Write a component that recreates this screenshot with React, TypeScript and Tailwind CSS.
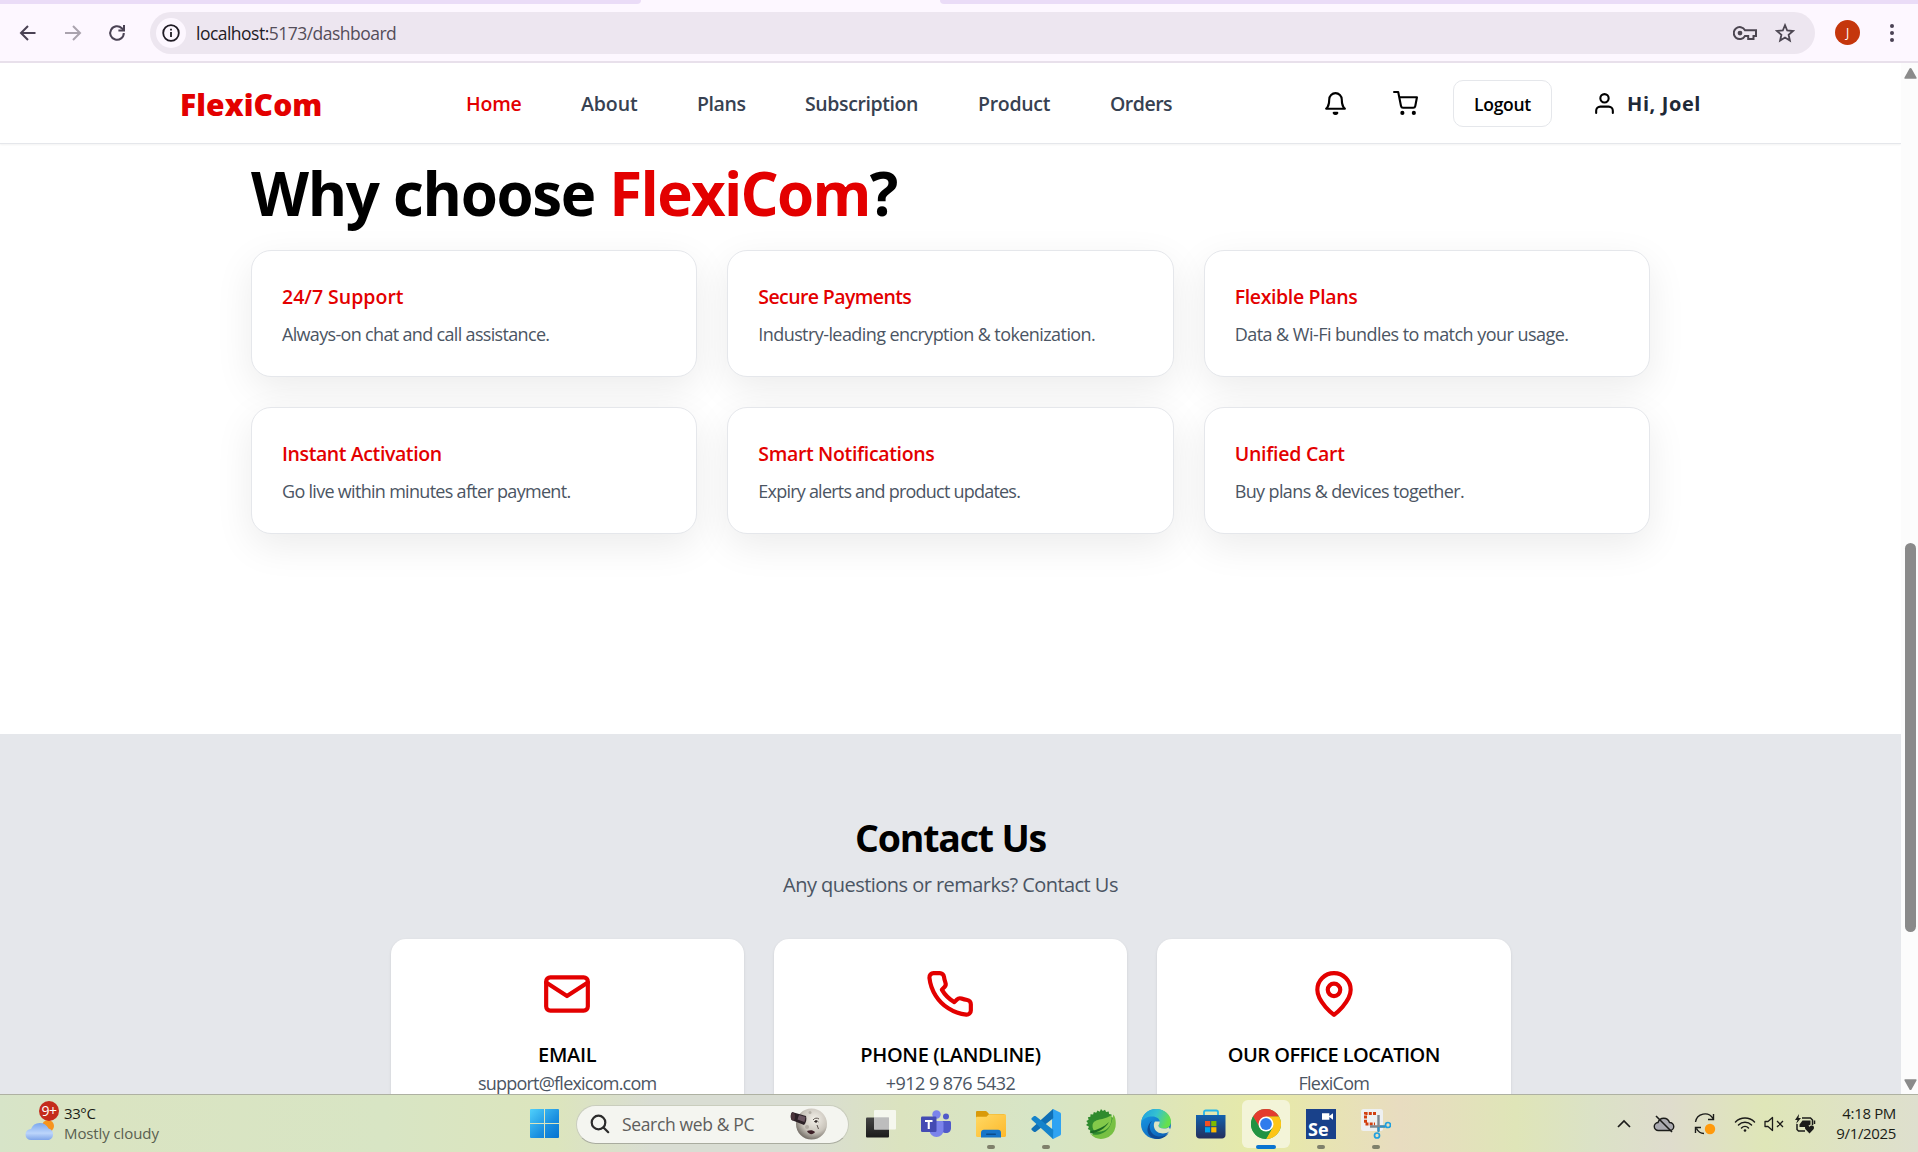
import type { ReactNode } from 'react';

const navItems = [
  { label: 'Home', cls: 'w-[55px] tracking-[-0.2px] text-[#e30000]' },
  { label: 'About', cls: 'w-[56px] tracking-[-0.1px] text-[#374151]' },
  { label: 'Plans', cls: 'w-[48px] tracking-[-0.4px] text-[#374151]' },
  { label: 'Subscription', cls: 'w-[113px] tracking-[-0.4px] text-[#374151]' },
  { label: 'Product', cls: 'w-[72px] tracking-[-0.3px] text-[#374151]' },
  { label: 'Orders', cls: 'w-[61px] tracking-[-0.5px] text-[#374151]' },
];

const features = [
  { title: '24/7 Support', text: 'Always-on chat and call assistance.', t: '', d: 'tracking-[-0.67px]' },
  { title: 'Secure Payments', text: 'Industry-leading encryption & tokenization.', t: 'tracking-[-0.6px]', d: 'tracking-[-0.58px]' },
  { title: 'Flexible Plans', text: 'Data & Wi-Fi bundles to match your usage.', t: 'tracking-[-0.36px]', d: 'tracking-[-0.54px]' },
  { title: 'Instant Activation', text: 'Go live within minutes after payment.', t: 'tracking-[-0.4px]', d: 'tracking-[-0.7px]' },
  { title: 'Smart Notifications', text: 'Expiry alerts and product updates.', t: 'tracking-[-0.34px]', d: 'tracking-[-0.78px]' },
  { title: 'Unified Cart', text: 'Buy plans & devices together.', t: 'tracking-[-0.25px]', d: 'tracking-[-0.62px]' },
];

function Line({ children, className = 'size-[25px]' }: { children: ReactNode; className?: string }) {
  return (
    <svg viewBox="0 0 24 24" className={`${className} shrink-0 overflow-visible`} fill="none" stroke="currentColor" strokeWidth="2" strokeLinecap="round" strokeLinejoin="round">
      {children}
    </svg>
  );
}

function BrowserBar() {
  return (
    <div className="flex h-[63px] shrink-0 flex-col border-b-2 border-[#e8e0eb] bg-[#fdf7ff]">
      <div className="flex h-1 shrink-0 justify-between">
        <div className="w-[641px] rounded-br-[10px] bg-[#eadcf7]" />
        <div className="w-[978px] rounded-bl-[10px] bg-[#eadcf7]" />
      </div>
      <div className="flex h-[57px] items-center">
        <svg viewBox="0 0 20 20" className="ml-[18px] size-5 text-[#4a4254]" fill="none" stroke="currentColor" strokeWidth="2">
          <path d="M17.5 10H3.5M10 3 3 10l7 7" />
        </svg>
        <svg viewBox="0 0 20 20" className="ml-[25px] size-5 text-[#aaa3ae]" fill="none" stroke="currentColor" strokeWidth="2">
          <path d="M2 10h14.5M10 3l7 7-7 7" />
        </svg>
        <svg viewBox="0 0 20 20" className="ml-6 size-5 text-[#4a4254]" fill="none" stroke="currentColor" strokeWidth="2">
          <path d="M16.8 10a6.8 6.8 0 1 1-2-4.8L17 7.3" />
          <path d="M17 2v5.6h-5.6" />
        </svg>
        <div className="ml-[23px] flex h-[42px] w-[1665px] items-center rounded-full bg-[#ede6f0] pl-[6px]">
          <div className="flex size-[30px] items-center justify-center rounded-full bg-[#fdf7ff]">
            <svg viewBox="0 0 18 18" className="size-[18px] text-[#1f1b24]" fill="none" stroke="currentColor" strokeWidth="1.8">
              <circle cx="9" cy="9" r="7.8" />
              <path d="M9 8v5M9 4.8v1.8" />
            </svg>
          </div>
          <span className="ml-[10px] text-[17.5px] leading-6 tracking-[-0.52px] text-[#1f1b24]">
            localhost:<span className="text-[#544d59]">5173/dashboard</span>
          </span>
          <svg viewBox="0 0 24 18" className="ml-auto h-[18px] w-6 text-[#4c4651]" fill="none" stroke="currentColor" strokeWidth="2">
            <path d="M12 6.2A6 6 0 1 0 12 12h3.2v3h5.3v-3H23V6.2Z" />
            <circle cx="7" cy="9.1" r="2.4" fill="currentColor" stroke="none" />
          </svg>
          <svg viewBox="0 0 20 20" className="mr-5 ml-[18px] size-5 text-[#4c4651]" fill="none" stroke="currentColor" strokeWidth="1.8">
            <path d="m10 2.2 2.2 5.3 5.8.5-4.4 3.8 1.3 5.7-4.9-3-4.9 3 1.3-5.7L2 8l5.8-.5Z" />
          </svg>
        </div>
        <div className="ml-5 flex size-[25px] items-center justify-center rounded-full bg-[#c5360c] text-xs text-white">J</div>
        <svg viewBox="0 0 6 20" className="ml-[29px] h-5 w-[6px]" fill="#4a4254">
          <circle cx="3" cy="3" r="2" />
          <circle cx="3" cy="10" r="2" />
          <circle cx="3" cy="17" r="2" />
        </svg>
      </div>
    </div>
  );
}

function Header() {
  return (
    <header className="relative flex h-[81px] shrink-0 items-center border-b border-[#e5e7eb] bg-white pl-[180px] whitespace-nowrap shadow-[0_1px_2px_rgba(0,0,0,0.05)]">
      <div className="w-[142px] pt-0.5 text-[30px] font-extrabold tracking-[0.1px] text-[#e30000]">FlexiCom</div>
      <nav className="ml-[144px] flex gap-[60px] pt-0.5 text-[19.5px] font-semibold">
        {navItems.map((n) => (
          <a key={n.label} className={n.cls}>{n.label}</a>
        ))}
      </nav>
      <div className="ml-[152px] flex items-center text-black">
        <Line>
          <path d="M18 8A6 6 0 0 0 6 8c0 7-3 9-3 9h18s-3-2-3-9" />
          <path d="M13.73 21a2 2 0 0 1-3.46 0Z" />
        </Line>
        <Line className="ml-[45px] size-[25px]">
          <circle cx="9" cy="21" r="1" />
          <circle cx="20" cy="21" r="1" />
          <path d="M1 1h4l2.68 13.39a2 2 0 0 0 2 1.61h9.72a2 2 0 0 0 2-1.61L23 6H6" />
        </Line>
        <button className="ml-[35px] flex h-[47px] w-[99px] items-center justify-center rounded-[10px] border border-[#e5e7eb] pt-0.5 text-[17.5px] font-semibold tracking-[-0.3px]">Logout</button>
        <Line className="ml-10 size-[25px]">
          <path d="M20 21v-2a4 4 0 0 0-4-4H8a4 4 0 0 0-4 4v2" />
          <circle cx="12" cy="7" r="4" />
        </Line>
        <span className="ml-[10px] pt-px text-[20px] font-bold tracking-[0.6px] text-[#1f2937]">Hi, Joel</span>
      </div>
    </header>
  );
}

function ContactCard({ icon, title, text, t, d }: { icon: ReactNode; title: string; text: string; t: string; d: string }) {
  return (
    <div className="flex h-[240px] flex-col items-center rounded-[15px] bg-white pt-[30px] whitespace-nowrap shadow-[0_1px_3px_rgba(0,0,0,0.1)]">
      <Line className="size-[50px] text-[#e30000]">{icon}</Line>
      <h3 className={`mt-[21px] text-[20px] leading-[30px] font-semibold text-black ${t}`}>{title}</h3>
      <p className={`text-[18px] leading-[26px] text-[#4b5563] ${d}`}>{text}</p>
    </div>
  );
}

function Page() {
  return (
    <main className="flex h-full w-[1901px] flex-col overflow-hidden">
      <Header />
      <section className="h-[590px] shrink-0 bg-white pt-[19px]">
        <h1 className="ml-[251px] text-[60px] leading-[60px] font-bold tracking-[-1.3px] whitespace-nowrap text-black">
          Why choose <span className="tracking-[-1.7px] text-[#e30000]">FlexiCom</span>?
        </h1>
        <div className="mt-[27px] ml-[251px] grid w-[1399px] grid-cols-3 gap-[30px]">
          {features.map((f) => (
            <div key={f.title} className="h-[127px] rounded-[20px] border border-[#e5e7eb] bg-white pt-[31px] pl-[30px] whitespace-nowrap shadow-[0_12px_38px_rgba(0,0,0,0.08)]">
              <h3 className={`text-[19.5px] leading-[30px] font-semibold text-[#e30000] ${f.t}`}>{f.title}</h3>
              <p className={`mt-[10px] text-[18px] leading-[25px] text-[#4b5563] ${f.d}`}>{f.text}</p>
            </div>
          ))}
        </div>
      </section>
      <section className="flex grow flex-col items-center bg-[#e5e7eb] pt-[81px]">
        <h2 className="text-[37.5px] leading-[45px] font-bold tracking-[-1.2px] text-black">Contact Us</h2>
        <p className="mt-[10px] text-[20px] leading-[30px] tracking-[-0.54px] text-[#4b5563]">Any questions or remarks? Contact Us</p>
        <div className="mt-[39px] grid w-[1120px] grid-cols-3 gap-[30px]">
          <ContactCard
            title="EMAIL" text="support@flexicom.com" t="tracking-[-0.3px]" d="tracking-[-0.78px]"
            icon={<><path d="M4 4h16a2 2 0 0 1 2 2v12a2 2 0 0 1-2 2H4a2 2 0 0 1-2-2V6a2 2 0 0 1 2-2Z" /><path d="M22 6.500 12 13 2 6.500" /></>}
          />
          <ContactCard
            title="PHONE (LANDLINE)" text="+912 9 876 5432" t="tracking-[-0.35px]" d="tracking-[-0.53px]"
            icon={<path d="M22 16.92v3a2 2 0 0 1-2.18 2 19.79 19.79 0 0 1-8.63-3.07 19.5 19.5 0 0 1-6-6 19.79 19.79 0 0 1-3.07-8.67A2 2 0 0 1 4.11 2h3a2 2 0 0 1 2 1.72 12.84 12.84 0 0 0 .7 2.81 2 2 0 0 1-.45 2.11L8.09 9.91a16 16 0 0 0 6 6l1.27-1.27a2 2 0 0 1 2.11-.45 12.84 12.84 0 0 0 2.81.7A2 2 0 0 1 22 16.92z" />}
          />
          <ContactCard
            title="OUR OFFICE LOCATION" text="FlexiCom" t="tracking-[-0.52px]" d="tracking-[-0.76px]"
            icon={<><path d="M20 10c0 6-8 12-8 12s-8-6-8-12a8 8 0 0 1 16 0Z" /><circle cx="12" cy="10" r="3" /></>}
          />
        </div>
      </section>
    </main>
  );
}

function ScrollArrow({ className }: { className: string }) {
  return (
    <svg viewBox="0 0 13 11" className={`h-[11px] w-[13px] shrink-0 ${className}`} fill="#8a8a8a">
      <path d="M6.5 0c.5 0 .8.3 1 .6l5 8.9c.3.7 0 1.3-.8 1.3H1.3c-.8 0-1.100-.6-.8-1.300l5-8.900c.2-.3.5-.6 1-.6Z" />
    </svg>
  );
}

function Scrollbar() {
  return (
    <div className="flex w-[17px] flex-col items-center bg-[#fcfcfc] pt-[5px] pb-1 pl-px">
      <ScrollArrow className="" />
      <div className="mt-[464px] h-[389px] w-[11px] shrink-0 rounded-full bg-[#8a8a8a]" />
      <ScrollArrow className="mt-auto rotate-180" />
    </div>
  );
}

function AppIcon({ children, mark }: { children: ReactNode; mark?: 'open' | 'active' }) {
  return (
    <div className={mark === 'active' ? 'relative flex size-12 items-center justify-center rounded-md bg-[#f3f4d8]' : 'relative flex h-12 w-[30px] items-center justify-center'}>
      <svg viewBox="0 0 30 30" className="size-[30px]">{children}</svg>
      {mark === 'open' && <span className="absolute -bottom-px left-[11px] h-1 w-2 rounded-full bg-[#7f806b]" />}
      {mark === 'active' && <span className="absolute -bottom-px left-[14px] h-1 w-5 rounded-full bg-[#0a74d1]" />}
    </div>
  );
}

function AppIcons() {
  return (
    <div className="ml-4 flex items-center gap-[25px]">
      <AppIcon>
        <defs>
          <linearGradient id="tv" x1="0" y1="0" x2="0" y2="1"><stop offset="0" stopColor="#444" /><stop offset="1" stopColor="#1b1b1b" /></linearGradient>
        </defs>
        <rect x="0" y="8.5" width="23" height="20" rx="1" fill="url(#tv)" />
        <rect x="8" y="1" width="22" height="19.5" rx="1" fill="#fff" fillOpacity="0.72" />
        <path d="M8 20.5V8.5h15v12Z" fill="#bdbdbd" />
      </AppIcon>
      <AppIcon>
        <circle cx="25" cy="7.5" r="3" fill="#5059c9" />
        <path d="M20 12h8.500c.8 0 1.500.700 1.500 1.500V19c0 3-2 5-5 5s-5-2-5-5Z" fill="#5059c9" />
        <circle cx="15.5" cy="5.5" r="4.200" fill="#7b83eb" />
        <path d="M9 12h12c.8 0 1.500.7 1.500 1.500V21a7 7 0 0 1-14 0v-8.500Z" fill="#7b83eb" />
        <rect x="0" y="7.5" width="15.5" height="15.5" rx="1.3" fill="#444bb3" />
        <path d="M4 11h7.500v2H8.800v7H6.700v-7H4Z" fill="#fff" />
      </AppIcon>
      <AppIcon mark="open">
        <defs><linearGradient id="fo" x1="0" y1="0" x2="1" y2="1"><stop offset="0" stopColor="#ffd964" /><stop offset="1" stopColor="#fdb92c" /></linearGradient></defs>
        <path d="M0 3.200C0 2.500.500 2 1.200 2h8.300c.7 0 1 .2 1.500.7L13 5h15.500v5H0Z" fill="#d99a0a" />
        <path d="M0 9c0-.8.500-1.300 1.200-1.300h9.300L13 5.200h15.800c.7 0 1.200.5 1.200 1.200v20.400c0 .7-.5 1.200-1.200 1.200H1.200C.5 28 0 27.500 0 26.800Z" fill="url(#fo)" />
        <path d="M5 28.500v-5c0-1.700 1.200-2.800 2.800-2.800h14.400c1.600 0 2.800 1.100 2.800 2.800v5Z" fill="#1674c8" />
        <rect x="10" y="24.5" width="10" height="1.5" rx="0.7" fill="#0b4c8c" />
      </AppIcon>
      <AppIcon mark="open">
        <path d="m22 0 6.600 3.200c.9.400 1.400 1 1.400 2v19.600c0 1-.5 1.600-1.400 2L22 30l-1-2V2Z" fill="#2fa3f2" />
        <path d="M22 0 1 19c-.8.700-.8 1.600 0 2.200l1.800 1.500c.6.500 1.300.5 2 0L22.500 9Z" fill="#0f6fb5" />
        <path d="M22 30 1 11c-.8-.7-.8-1.600 0-2.200l1.800-1.500c.6-.5 1.300-.5 2 0L22.500 21Z" fill="#1583cb" />
        <path d="M22 0v30l.5-.2V.2Z" fill="#2fa3f2" />
      </AppIcon>
      <AppIcon>
        <path d="m15 0 1.800 2L19 .8l1.100 2.300 2.600-.5.4 2.500 2.500.300-.4 2.600 2.400 1.100-2 14L15 28l-2-.5-2.300 1-1.300-2.200-2.500.4-.5-2.500-2.500-.5.300-2.500L1.800 20 3 17.800 0 16l2-1.800L.3 12l2.300-1.200L1.900 8.300l2.500-.5.100-2.600 2.600.2.700-2.500 2.400.8L11.500 1.500l2.200 1.200Z" fill="#2f8b2e" />
        <path d="M27.500 5.500C30 9 30 14 29.500 18a14.500 14.500 0 0 1-25 7C10 27 18 25 22 20S26 10 27.500 5.500Z" fill="#77c043" />
        <path d="M25.500 6C18 12 7 8.500 6.500 17c0 2.500 1 4.500 2.500 5.500 9 1.500 18-3 16.500-16.500Z" fill="#83c94a" />
        <path d="M4.500 24.500C12 23.500 19 20 23 13c-5 5-12 8-18 9Z" fill="#1d6b24" />
      </AppIcon>
      <AppIcon>
        <defs>
          <linearGradient id="e1" x1="0" y1="0" x2="1" y2="0.3"><stop offset="0" stopColor="#1b9de2" /><stop offset="0.55" stopColor="#35c1d0" /><stop offset="1" stopColor="#66e04c" /></linearGradient>
          <linearGradient id="e2" x1="0" y1="0" x2="0.7" y2="1"><stop offset="0" stopColor="#1ba0ea" /><stop offset="1" stopColor="#0b62b8" /></linearGradient>
        </defs>
        <circle cx="15" cy="15" r="15" fill="url(#e2)" />
        <path d="M0.200 13C1.500 5 7.500 0 15 0c8.500 0 15 6 15 12.500 0 4.500-3 7-7 7-3.500 0-5.500-1.300-5.500-2.700 0-1 1.300-1.500 1.300-4 0-3-3.300-5.300-7.300-5.300C6.500 7.500 2 9.500.2 13Z" fill="url(#e1)" />
        <path d="M11 12c-3.500 3.500-3 10 1.500 13.500 4.500 3.300 11 2.500 15-1.500C25 28 20.500 30 16 30 9 29.500 6 24 6.500 20S9 13 11 12Z" fill="#0d4a94" />
        <path d="M18.800 12.500c0 2.800-1.300 3.300-1.300 4.300 0 1.400 2 2.700 5.500 2.700 2 0 3.700-.5 5-1.600l1.500 3.600c-3 3-9 4-13 1.500S12 15 14 12.500Z" fill="#dbe5c4" />
      </AppIcon>
      <AppIcon>
        <defs><linearGradient id="ms" x1="0" y1="0" x2="0" y2="1"><stop offset="0" stopColor="#1262ae" /><stop offset="1" stopColor="#242f5c" /></linearGradient></defs>
        <path d="M8 7V3.200C8 2.200 8.700 1.500 9.700 1.500h10.600c1 0 1.700.700 1.700 1.700V7" fill="none" stroke="#25b5ea" strokeWidth="1.8" />
        <path d="M0 6h29.500v20c0 2-1.500 3.500-3.500 3.500H3.500C1.500 29.500 0 28 0 26Z" fill="url(#ms)" />
        <rect x="9" y="12" width="5.2" height="5.2" fill="#f25022" /><rect x="15.2" y="12" width="5.2" height="5.2" fill="#7fba00" />
        <rect x="9" y="18.2" width="5.2" height="5.2" fill="#00a4ef" /><rect x="15.2" y="18.2" width="5.2" height="5.2" fill="#ffb900" />
      </AppIcon>
      <div className="-mx-[9px]">
        <AppIcon mark="active">
          <circle cx="15" cy="15" r="15" fill="#2da94f" />
          <path d="M2 7.500A15 15 0 0 1 28 7.500L15 8 8.800 18.500Z" fill="#e33b2e" />
          <path d="M28 7.500A15 15 0 0 1 15 30l6.500-11.200L15 7.500Z" fill="#fdc516" />
          <path d="M2 7.500 8.600 18.700 15 22l6.400-3.300L15 30A15 15 0 0 1 2 7.500Z" fill="#229342" />
          <circle cx="15" cy="15" r="7.5" fill="#fff" />
          <circle cx="15" cy="15" r="5.9" fill="#2f7cec" />
        </AppIcon>
      </div>
      <div className="relative flex h-12 w-[30px] items-center">
        <div className="flex size-[30px] flex-col bg-[#19418a]">
          <svg viewBox="0 0 12 7" className="mt-1 ml-4 h-[7px] w-[11px] shrink-0" fill="#fff"><path d="M0 0h8v7H0ZM8 3l4-3v7L8 4Z" /></svg>
          <span className="pl-[2px] text-[18px] leading-[18px] font-bold text-white">Se</span>
        </div>
        <span className="absolute -bottom-px left-[11px] h-1 w-2 rounded-full bg-[#7f806b]" />
      </div>
      <AppIcon mark="open">
        <rect x="0" y="0" width="22" height="22" rx="2.5" fill="#eef0f2" />
        <path d="M15 4.500H4.500V15H14" fill="none" stroke="#d23f10" strokeWidth="3" strokeDasharray="3 1.2" />
        <path d="M17.500 6v16M9 17.500h15" stroke="#7d8790" strokeWidth="2.4" />
        <path d="M17.500 18v5M19 17.500h6" stroke="#2b93c9" strokeWidth="2" />
        <circle cx="16" cy="26.5" r="2.5" fill="none" stroke="#1d9fe0" strokeWidth="1.7" />
        <circle cx="27" cy="16" r="2.5" fill="none" stroke="#1d9fe0" strokeWidth="1.7" />
      </AppIcon>
    </div>
  );
}

function Moon() {
  return (
    <svg viewBox="0 0 38 32" className="mr-5 ml-auto h-8 w-[38px]">
      <defs><radialGradient id="mo" cx="0.6" cy="0.35" r="0.7"><stop offset="0" stopColor="#f4f1ea" /><stop offset="0.6" stopColor="#c9c4bb" /><stop offset="1" stopColor="#6b655e" /></radialGradient></defs>
      <circle cx="21.5" cy="16" r="15.5" fill="url(#mo)" />
      <path d="m2 4 14 4c1 3 0 7-2 9L1.500 12C0 9 .5 6 2 4Z" fill="#2c2127" />
      <path d="m9 7 6.500 2-1 5-7-2.500Z" fill="#6a5560" />
      <ellipse cx="3" cy="8.5" rx="2" ry="4" fill="#4b353c" />
      <path d="M23 12c1.500-2 4-2.500 6-1M24 14c1-1.500 3.500-1.500 4.500 0M27 17l1.500 4" fill="none" stroke="#5a524d" strokeWidth="1" />
      <circle cx="26" cy="13.5" r="1.2" fill="#332b2b" />
      <path d="M17 23c3-1 6-1 8 1-2 3-6 3-8-1Z" fill="#3d1f27" />
      <circle cx="20" cy="4.5" r="1.5" fill="#b5b0a7" /><circle cx="17" cy="19" r="2" fill="#b3ada5" />
    </svg>
  );
}

function Taskbar() {
  return (
    <footer className="flex h-[58px] shrink-0 items-center border-t border-[#aeb1a2] bg-[linear-gradient(90deg,#d7e4c8_0%,#dae4c2_5%,#d8e5c4_20%,#dce5bd_29%,#d9ddd3_34%,#d9ddd3_42%,#dbe3bf_47%,#d7e5c6_54%,#dde5bb_60%,#e7eaa7_66%,#e8dcc0_73%,#dfe5b8_79%,#dbe2c6_83%,#dfdccd_87%,#dfe6b8_92%,#dedfce_100%)] whitespace-nowrap">
      <div className="flex w-[530px] items-center pl-6">
        <div className="relative h-[46px] w-8">
          <svg viewBox="0 0 32 26" className="mt-[15px] h-[26px] w-8">
            <defs><linearGradient id="cl" x1="0" y1="0" x2="0" y2="1"><stop offset="0" stopColor="#7ba7ee" /><stop offset="0.6" stopColor="#bcd5fb" /><stop offset="1" stopColor="#7fa5ea" /></linearGradient></defs>
            <circle cx="24" cy="10" r="6" fill="#f7941d" />
            <path d="M7 24a5.500 5.500 0 0 1 0-11 9.500 9.500 0 0 1 17.500-.5A6 6 0 0 1 25 24Z" fill="url(#cl)" />
          </svg>
          <span className="absolute top-0 left-[15px] flex size-5 items-center justify-center rounded-full bg-[#c42b1c] text-[14px] leading-5 tracking-[-0.5px] text-white">9+</span>
        </div>
        <div className="ml-2 pb-0.5 text-[15px] leading-5">
          <div className="tracking-[-0.4px] text-[#1b1d17]">33°C</div>
          <div className="tracking-[-0.1px] text-[#596050]">Mostly cloudy</div>
        </div>
      </div>
      <svg viewBox="0 0 29 29" className="size-[29px]">
        <defs><linearGradient id="wi" x1="0" y1="0" x2="1" y2="1"><stop offset="0" stopColor="#4fd0fb" /><stop offset="0.6" stopColor="#1a8fe0" /><stop offset="1" stopColor="#0573d0" /></linearGradient></defs>
        <path d="M1 0h13v14H0V1a1 1 0 0 1 1-1ZM15 0h13a1 1 0 0 1 1 1v13H15ZM0 15h14v14H1a1 1 0 0 1-1-1ZM15 15h14v13a1 1 0 0 1-1 1H15Z" fill="url(#wi)" />
      </svg>
      <div className="mt-px mr-px ml-[17px] flex h-[39px] w-[273px] items-center rounded-full border border-[#c9cdbd] border-b-[#a9ac9f] bg-[#f4f5f0] pl-[13px]">
        <svg viewBox="0 0 20 20" className="size-5" fill="none" stroke="#2b2b2b" strokeWidth="2.2" strokeLinecap="round"><circle cx="8.5" cy="8.5" r="6.8" /><path d="m13.500 13.500 4.700 4.700" /></svg>
        <span className="ml-3 text-[17.5px] leading-6 tracking-[-0.35px] text-[#5e5e5c]">Search web &amp; PC</span>
        <Moon />
      </div>
      <AppIcons />
      <div className="ml-auto flex items-center pr-[22px] text-[#1c1c1a]">
        <svg viewBox="0 0 14 9" className="h-[9px] w-[14px]" fill="none" stroke="currentColor" strokeWidth="1.7"><path d="m1 8 6-6 6 6" /></svg>
        <svg viewBox="0 0 22 18" className="ml-[22px] h-[18px] w-[22px]" fill="none" stroke="currentColor" strokeWidth="1.4">
          <path d="M5.500 15.500a4 4 0 0 1-.5-8 6 6 0 0 1 11.500 0 4 4 0 0 1 .5 8Z" fill="#aaa9b0" />
          <path d="m3 1 16 16" strokeWidth="1.6" />
        </svg>
        <svg viewBox="0 0 22 22" className="ml-[19px] size-[22px]" fill="none" stroke="currentColor" strokeWidth="1.4">
          <path d="M1.500 9A9.500 9.500 0 0 1 19 5.500M19.500 1v5.500H14M10 20.500c-3 0-6-2-7.500-5M1.500 20v-5.500H7" />
          <circle cx="16" cy="16" r="5.2" fill="#ff9a0c" stroke="none" />
        </svg>
        <svg viewBox="0 0 22 18" className="ml-[18px] h-[18px] w-[22px]" fill="none" stroke="currentColor" strokeWidth="1.5" strokeLinecap="round">
          <path d="M1.500 7a13.500 13.500 0 0 1 19 0M4.500 10a9.200 9.200 0 0 1 13 0M7.500 13a5 5 0 0 1 7 0" />
          <circle cx="11" cy="15.5" r="1.3" fill="currentColor" stroke="none" />
        </svg>
        <svg viewBox="0 0 20 16" className="ml-2 h-4 w-5" fill="none" stroke="currentColor" strokeWidth="1.3" strokeLinejoin="round">
          <path d="M1 5.500h3L8.500 1.500v13L4 10.500H1ZM13 5l6 6M19 5l-6 6" />
        </svg>
        <svg viewBox="0 0 22 20" className="ml-[10px] h-5 w-[22px]" fill="currentColor">
          <path d="M5 0 1 6h2.500L2 10l5-6H4.500Z" />
          <path d="M8 4h8.500l2 2v5M3 10v5.500l1.500 1.500H11" fill="none" stroke="currentColor" strokeWidth="1.5" />
          <path d="M8.500 6.500h8v4L12.500 13H5.500v-2.500Z" />
          <path d="M15.500 19.500 11.500 15.300c-1-1.200-.6-3.300 1.200-3.700 1.100-.2 2 .2 2.800 1.200.8-1 1.700-1.400 2.800-1.200 1.800.4 2.200 2.500 1.200 3.700Z" />
          <path d="M20.500 6.500v3.500" stroke="currentColor" strokeWidth="1.5" />
        </svg>
        <div className="w-20 pb-0.5 text-right text-[15px] leading-5 tracking-[-0.35px] text-[#1b1d17]">
          <div>4:18 PM</div>
          <div>9/1/2025</div>
        </div>
      </div>
    </footer>
  );
}

export default function App() {
  return (
    <div className="flex h-[1152px] w-[1918px] flex-col overflow-hidden bg-white font-['Open_Sans',sans-serif]">
      <BrowserBar />
      <div className="flex h-[1031px] shrink-0">
        <Page />
        <Scrollbar />
      </div>
      <Taskbar />
    </div>
  );
}
